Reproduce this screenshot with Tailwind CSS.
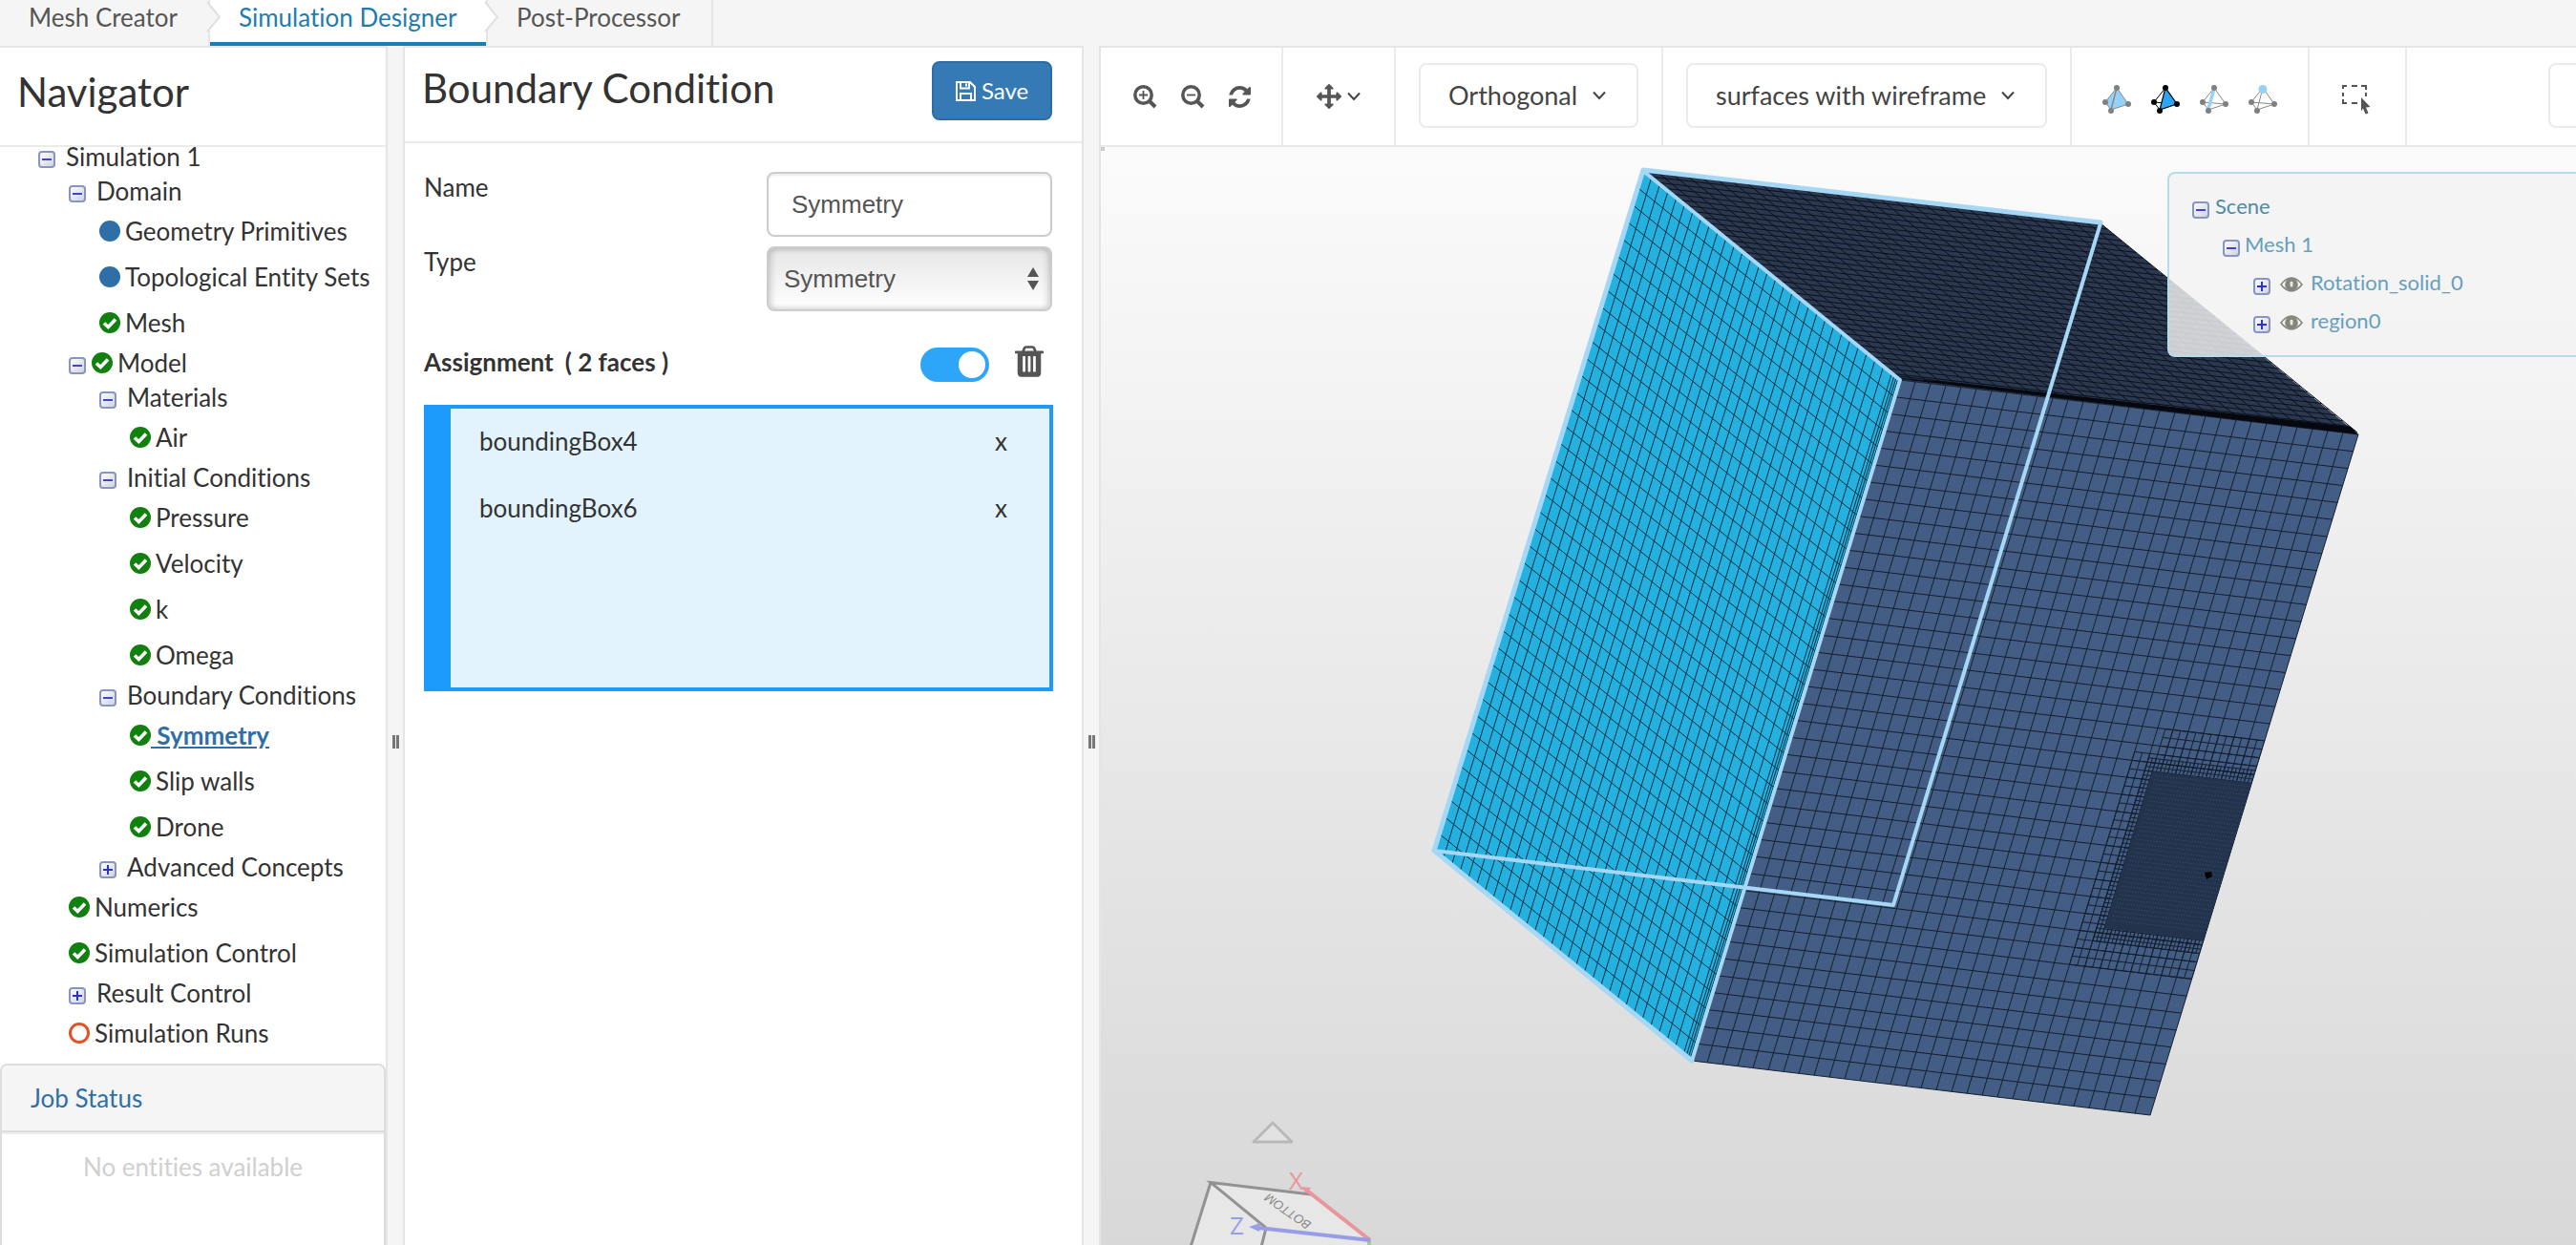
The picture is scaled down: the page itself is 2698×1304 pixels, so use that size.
<!DOCTYPE html>
<html lang="en">
<head>
<meta charset="utf-8">
<title>Simulation Designer</title>
<script src="https://cdn.jsdelivr.net/npm/@tailwindcss/browser@4"></script>
</head>
<body class="flex h-screen flex-col overflow-hidden bg-[#f5f5f5] font-['Lato',sans-serif] text-[26px] leading-8 text-[#333] [font-variant-ligatures:no-common-ligatures]">

<!-- Shared icons -->
<svg class="absolute size-0" aria-hidden="true">
  <defs>
    <linearGradient id="boxfill" x1="0" y1="0" x2="1" y2="1"><stop offset="0" stop-color="#fff"/><stop offset="1" stop-color="#cfd0da"/></linearGradient>
  </defs>
  <symbol id="minus" viewBox="0 0 18 18"><rect x="1" y="1" width="16" height="16" rx="3" fill="url(#boxfill)" stroke="#8794c6" stroke-width="2"/><path d="M4 9h10" stroke="#3b44d6" stroke-width="2"/></symbol>
  <symbol id="plus" viewBox="0 0 18 18"><rect x="1" y="1" width="16" height="16" rx="3" fill="url(#boxfill)" stroke="#8794c6" stroke-width="2"/><path d="M4 9h10M9 4v10" stroke="#2a33d2" stroke-width="2"/></symbol>
  <symbol id="check" viewBox="0 0 22 22"><circle cx="11" cy="11" r="11" fill="#12800f"/><path d="M5 11.5l4.300 4 7.700-8" fill="none" stroke="#fff" stroke-width="3.600"/></symbol>
  <symbol id="dot" viewBox="0 0 22 22"><circle cx="11" cy="11" r="11" fill="#2f6fa7"/></symbol>
  <symbol id="ring" viewBox="0 0 22 22"><circle cx="11" cy="11" r="9.500" fill="#fff" stroke="#df5426" stroke-width="3"/></symbol>
  <symbol id="eye" viewBox="0 0 24 16"><path d="M1 8Q12-6 23 8Q12 22 1 8z" fill="none" stroke="#85857d" stroke-width="1.600"/><circle cx="12" cy="8" r="6.800" fill="#85857d"/><rect x="10.500" y="4.500" width="3" height="6" rx="1.500" fill="#e6e6e4"/></symbol>
  <symbol id="chev" viewBox="0 0 14 10"><path d="M1 1.500l6 6.500 6-6.500" fill="none" stroke="#444" stroke-width="2"/></symbol>
</svg>

<nav class="flex h-12 shrink-0">
  <a href="#" class="relative w-[220px] border-r-2 border-[#e5e5e5] pl-[30px] pt-[2px] text-[#555]">Mesh Creator
    <svg class="absolute -right-[14px] top-[2px] z-10" width="16" height="32"><path d="M1 0l13 16L1 31" fill="#f5f5f5" stroke="#e0e0e0" stroke-width="2"/></svg>
  </a>
  <a href="#" class="relative w-[289px] border-b-4 border-[#1e7cb0] bg-white pl-[30px] pt-[2px] text-[#1e7cb0]">Simulation Designer
    <svg class="absolute -right-[14px] top-[2px] z-10" width="16" height="32"><path d="M1 0l13 16L1 31" fill="#fff" stroke="#e0e0e0" stroke-width="2"/></svg>
  </a>
  <a href="#" class="w-[238px] border-x-2 border-[#e5e5e5] pl-[30px] pt-[2px] text-[#555]">Post-Processor</a>
</nav>

<main class="flex min-h-0 flex-1">
  <!-- Navigator -->
  <aside class="flex w-[406px] shrink-0 flex-col border-r-2 border-t-2 border-[#e5e5e5] bg-white">
    <h1 class="relative z-10 h-[104px] shrink-0 border-b-2 border-[#ebebeb] bg-white pl-[18px] pt-[22px] text-[42px] leading-12">Navigator</h1>
    <ul class="-mt-2 shrink-0 whitespace-nowrap">
      <li class="flex h-9 items-center pl-[40px]"><svg class="mt-1.5 size-[18px]"><use href="#minus"/></svg><a href="#" class="ml-[11px]">Simulation 1</a></li>
      <li class="flex h-9 items-center pl-[72px]"><svg class="mt-1.5 size-[18px]"><use href="#minus"/></svg><a href="#" class="ml-[11px]">Domain</a></li>
      <li class="flex h-12 items-center pl-[104px]"><svg class="size-[22px]"><use href="#dot"/></svg><a href="#" class="ml-[5px]">Geometry Primitives</a></li>
      <li class="flex h-12 items-center pl-[104px]"><svg class="size-[22px]"><use href="#dot"/></svg><a href="#" class="ml-[5px]">Topological Entity Sets</a></li>
      <li class="flex h-12 items-center pl-[104px]"><svg class="size-[22px]"><use href="#check"/></svg><a href="#" class="ml-[5px]">Mesh</a></li>
      <li class="flex h-9 items-center pl-[72px]"><svg class="mt-1.5 size-[18px]"><use href="#minus"/></svg><svg class="ml-1.5 size-[22px]"><use href="#check"/></svg><a href="#" class="ml-[5px]">Model</a></li>
      <li class="flex h-9 items-center pl-[104px]"><svg class="mt-1.5 size-[18px]"><use href="#minus"/></svg><a href="#" class="ml-[11px]">Materials</a></li>
      <li class="flex h-12 items-center pl-[136px]"><svg class="size-[22px]"><use href="#check"/></svg><a href="#" class="ml-[5px]">Air</a></li>
      <li class="flex h-9 items-center pl-[104px]"><svg class="mt-1.5 size-[18px]"><use href="#minus"/></svg><a href="#" class="ml-[11px]">Initial Conditions</a></li>
      <li class="flex h-12 items-center pl-[136px]"><svg class="size-[22px]"><use href="#check"/></svg><a href="#" class="ml-[5px]">Pressure</a></li>
      <li class="flex h-12 items-center pl-[136px]"><svg class="size-[22px]"><use href="#check"/></svg><a href="#" class="ml-[5px]">Velocity</a></li>
      <li class="flex h-12 items-center pl-[136px]"><svg class="size-[22px]"><use href="#check"/></svg><a href="#" class="ml-[5px]">k</a></li>
      <li class="flex h-12 items-center pl-[136px]"><svg class="size-[22px]"><use href="#check"/></svg><a href="#" class="ml-[5px]">Omega</a></li>
      <li class="flex h-9 items-center pl-[104px]"><svg class="mt-1.5 size-[18px]"><use href="#minus"/></svg><a href="#" class="ml-[11px]">Boundary Conditions</a></li>
      <li class="flex h-12 items-center pl-[136px]"><svg class="size-[22px]"><use href="#check"/></svg><a href="#" class="font-bold text-[#2f6fa7] underline">&nbsp;Symmetry</a></li>
      <li class="flex h-12 items-center pl-[136px]"><svg class="size-[22px]"><use href="#check"/></svg><a href="#" class="ml-[5px]">Slip walls</a></li>
      <li class="flex h-12 items-center pl-[136px]"><svg class="size-[22px]"><use href="#check"/></svg><a href="#" class="ml-[5px]">Drone</a></li>
      <li class="flex h-9 items-center pl-[104px]"><svg class="mt-1.5 size-[18px]"><use href="#plus"/></svg><a href="#" class="ml-[11px]">Advanced Concepts</a></li>
      <li class="flex h-12 items-center pl-[72px]"><svg class="size-[22px]"><use href="#check"/></svg><a href="#" class="ml-[5px]">Numerics</a></li>
      <li class="flex h-12 items-center pl-[72px]"><svg class="size-[22px]"><use href="#check"/></svg><a href="#" class="ml-[5px]">Simulation Control</a></li>
      <li class="flex h-9 items-center pl-[72px]"><svg class="mt-1.5 size-[18px]"><use href="#plus"/></svg><a href="#" class="ml-[11px]">Result Control</a></li>
      <li class="flex h-12 items-center pl-[72px]"><svg class="size-[22px]"><use href="#ring"/></svg><a href="#" class="ml-[5px]">Simulation Runs</a></li>
    </ul>
    <section class="mt-2 flex min-h-0 flex-1 flex-col rounded-t-lg border-2 border-b-0 border-[#ddd]">
      <h2 class="h-[70px] shrink-0 rounded-t-lg border-b-2 border-[#ddd] bg-[#f5f5f5] pl-[30px] pt-[18px] text-[#2f6fa7]">Job Status</h2>
      <p class="border-t-2 border-[#eee] pt-[18px] text-center leading-8 text-[#d0d0d0]">No entities available</p>
    </section>
  </aside>

  <div class="flex w-4 shrink-0 justify-center pt-[722px]"><span class="h-3.5 w-[7px] border-x-[3px] border-[#777]"></span></div>

  <!-- Boundary condition editor -->
  <form class="w-[713px] shrink-0 border-x-2 border-t-2 border-[#e5e5e5] bg-white">
    <div class="flex h-[100px] items-start justify-between border-b-2 border-[#ebebeb] pl-[18px] pr-[31px] pt-3.5">
      <h1 class="pt-1 text-[42px] leading-12">Boundary Condition</h1>
      <button type="button" class="flex h-[62px] w-[126px] items-center justify-center gap-1.5 rounded-lg border-2 border-[#2e6da4] bg-[#367ab5] text-[24px] text-white">
        <svg width="21" height="21" viewBox="0 0 21 21" fill="none" stroke="#fff" stroke-width="2"><path d="M1 1h14l5 5v14H1zM5 1v6.500h9V1M5 20v-7h11v7"/><path d="M11 2.500v3"/></svg>Save</button>
    </div>
    <div class="flex flex-col gap-2.5 pl-5 pr-[31px] pt-[30px]">
      <div class="flex items-start justify-between"><label for="bcname">Name</label>
        <input id="bcname" type="text" value="Symmetry" class="h-[68px] w-[299px] rounded-lg border-2 border-[#ccc] px-6 font-['Liberation_Sans',sans-serif] text-[#555] shadow-[inset_0_2px_2px_rgba(0,0,0,0.08)]"></div>
      <div class="flex items-start justify-between"><label for="bctype">Type</label>
        <div class="relative">
          <select id="bctype" class="block h-[68px] w-[299px] appearance-none rounded-lg border-2 border-[#ccc] bg-linear-to-b from-[#e6e6e6] to-white px-4 font-['Liberation_Sans',sans-serif] text-[#555] shadow-[inset_3px_0_6px_rgba(0,0,0,0.15),inset_-3px_0_6px_rgba(0,0,0,0.15)]"><option>Symmetry</option></select>
          <svg class="pointer-events-none absolute right-3.5 top-[22px]" width="12" height="24"><path d="M0 10L6 0l6 10zM0 14h12L6 24z" fill="#555"/></svg>
        </div></div>
    </div>
    <div class="mt-9 flex items-start pl-5 pr-10">
      <label for="assign" class="mr-auto flex gap-3 pt-px font-bold"><span>Assignment</span><span>( 2 faces )</span></label>
      <input id="assign" type="checkbox" checked class="mt-0.5 h-9 w-[72px] appearance-none rounded-full bg-[#2da6f9] p-1 before:ml-9 before:block before:size-7 before:rounded-full before:bg-white">
      <button type="button" aria-label="Clear" class="ml-[27px]"><svg width="30" height="33" viewBox="192 128 1408 1536"><path fill="#555" d="M704 1376v-704q0-14-9-23t-23-9h-64q-14 0-23 9t-9 23v704q0 14 9 23t23 9h64q14 0 23-9t9-23zm256 0v-704q0-14-9-23t-23-9h-64q-14 0-23 9t-9 23v704q0 14 9 23t23 9h64q14 0 23-9t9-23zm256 0v-704q0-14-9-23t-23-9h-64q-14 0-23 9t-9 23v704q0 14 9 23t23 9h64q14 0 23-9t9-23zm-544-992h448l-48-117q-7-9-17-11h-317q-10 2-17 11zm928 32v64q0 14-9 23t-23 9h-96v948q0 83-47 143.500t-113 60.500h-832q-66 0-113-58.500t-47-141.500v-952h-96q-14 0-23-9t-9-23v-64q0-14 9-23t23-9h309l70-167q15-37 54-63t79-26h320q40 0 79 26t54 63l70 167h309q14 0 23 9t9 23z"/></svg></button>
    </div>
    <ul class="ml-5 mr-[30px] mt-6 h-[300px] border-4 border-l-[28px] border-[#1c9bfd] bg-[#e2f3fe] pl-[30px] pr-11 pt-[18px]">
      <li class="flex h-[70px] items-start justify-between"><span>boundingBox4</span><button type="button" aria-label="Remove boundingBox4">x</button></li>
      <li class="flex h-[70px] items-start justify-between"><span>boundingBox6</span><button type="button" aria-label="Remove boundingBox6">x</button></li>
    </ul>
  </form>

  <div class="flex w-4 shrink-0 justify-center pt-[722px]"><span class="h-3.5 w-[7px] border-x-[3px] border-[#777]"></span></div>

  <!-- Viewer -->
  <section class="flex min-w-0 flex-1 flex-col border-l-2 border-t-2 border-[#e5e5e5]">
    <div class="flex h-[104px] shrink-0 items-stretch border-b-2 border-[#e9e9e9] bg-white text-[27px] text-[#444]">
      <div class="flex w-[191px] items-center gap-[25px] border-r-2 border-[#ebebeb] pl-[34px]">
        <button type="button" aria-label="Zoom in"><svg class="block" width="25" height="25" viewBox="0 0 25 25" fill="none" stroke="#555"><circle cx="10.500" cy="10.500" r="8.700" stroke-width="3.500"/><path d="M17 17l6 6" stroke-width="4"/><path d="M6 10.500h9M10.500 6v9" stroke-width="1.800"/></svg></button>
        <button type="button" aria-label="Zoom out"><svg class="block" width="25" height="25" viewBox="0 0 25 25" fill="none" stroke="#555"><circle cx="10.500" cy="10.500" r="8.700" stroke-width="3.500"/><path d="M17 17l6 6" stroke-width="4"/><path d="M6 10.500h9" stroke-width="1.800"/></svg></button>
        <button type="button" aria-label="Reset view"><svg class="block" width="23" height="23" viewBox="128 128 1536 1536"><path fill="#555" d="M1639 1056q0 5-1 7-64 268-268 434.500t-478 166.500q-146 0-282.500-55t-243.500-157l-129 129q-19 19-45 19t-45-19-19-45v-448q0-26 19-45t45-19h448q26 0 45 19t19 45-19 45l-137 137q71 66 161 102t187 36q134 0 250-65t186-179q11-17 53-117 8-23 30-23h192q13 0 22.500 9.500t9.500 22.500zm25-800v448q0 26-19 45t-45 19h-448q-26 0-45-19t-19-45 19-45l138-138q-148-137-349-137-134 0-250 65t-186 179q-11 17-53 117-8 23-30 23h-199q-13 0-22.500-9.500t-9.500-22.500v-7q65-268 270-434.500t480-166.500q146 0 284 55.500t245 156.500l130-129q19-19 45-19t45 19 19 45z"/></svg></button>
      </div>
      <div class="flex w-[118px] items-center justify-center border-r-2 border-[#ebebeb]">
        <button type="button" aria-label="Move" class="flex items-center gap-1.5"><svg width="26" height="26" viewBox="0 0 1792 1792"><path fill="#555" d="M1792 896q0 26-19 45l-256 256q-19 19-45 19t-45-19-19-45v-128h-384v384h128q26 0 45 19t19 45-19 45l-256 256q-19 19-45 19t-45-19l-256-256q-19-19-19-45t19-45 45-19h128v-384h-384v128q0 26-19 45t-45 19-45-19l-256-256q-19-19-19-45t19-45l256-256q19-19 45-19t45 19 19 45v128h384v-384h-128q-26 0-45-19t-19-45 19-45l256-256q19-19 45-19t45 19l256 256q19 19 19 45t-19 45-45 19h-128v384h384v-128q0-26 19-45t45-19 45 19l256 256q19 19 19 45z"/></svg><svg class="h-2.5 w-3.5"><use href="#chev"/></svg></button>
      </div>
      <div class="flex w-[280px] items-start border-r-2 border-[#ebebeb] px-6 pt-4">
        <button type="button" class="flex h-[68px] w-[230px] items-center justify-between rounded-lg border-2 border-[#ebebeb] pl-[29px] pr-8">Orthogonal<svg class="h-2.5 w-3.5"><use href="#chev"/></svg></button>
      </div>
      <div class="flex w-[428px] items-start border-r-2 border-[#ebebeb] px-6 pt-4">
        <button type="button" class="flex h-[68px] w-[378px] items-center justify-between rounded-lg border-2 border-[#ebebeb] pl-[29px] pr-8">surfaces with wireframe<svg class="h-2.5 w-3.5"><use href="#chev"/></svg></button>
      </div>
      <div class="flex w-[249px] items-center gap-5 border-r-2 border-[#ebebeb] pl-8 pt-1.5">
        <button type="button" aria-label="Pick volumes"><svg class="block" width="31" height="30" viewBox="0 0 31 30"><path d="M15 3L3 18l6 8 18-6z" fill="#94d2fa" stroke="#888"/><path d="M15 3L9 26" stroke="#888" stroke-width="1.500"/><g fill="#808080"><circle cx="15" cy="3" r="3"/><circle cx="3" cy="18" r="3"/><circle cx="9" cy="27" r="3"/><circle cx="27" cy="20" r="3"/></g></svg></button>
        <button type="button" aria-label="Pick faces"><svg class="block" width="31" height="30" viewBox="0 0 31 30"><path d="M15 3L3 18l6 8M3 18l24 2" fill="none" stroke="#000"/><path d="M15 3L9 26l18-6z" fill="#2ba5f8" stroke="#000" stroke-width="1.200"/><g fill="#000"><circle cx="15" cy="3" r="3"/><circle cx="3" cy="18" r="3"/><circle cx="9" cy="27" r="3"/><circle cx="27" cy="20" r="3"/></g></svg></button>
        <button type="button" aria-label="Pick edges"><svg class="block" width="31" height="30" viewBox="0 0 31 30"><path d="M15 3L3 18l6 8 18-6zM3 18l24 2" fill="none" stroke="#888"/><path d="M15 4L9 25" stroke="#94d2fa" stroke-width="3.500"/><g fill="#808080"><circle cx="15" cy="3" r="3"/><circle cx="3" cy="18" r="3"/><circle cx="9" cy="27" r="3"/><circle cx="27" cy="20" r="3"/></g></svg></button>
        <button type="button" aria-label="Pick nodes"><svg class="block" width="31" height="30" viewBox="0 0 31 30"><path d="M15 3L3 18l6 8 18-6zM3 18l24 2M15 3L9 26" fill="none" stroke="#888"/><g fill="#808080"><circle cx="3" cy="18" r="3"/><circle cx="9" cy="27" r="3"/><circle cx="27" cy="20" r="3"/></g><circle cx="15" cy="4.500" r="4.500" fill="#94d2fa"/></svg></button>
      </div>
      <div class="flex w-[102px] items-center border-r-2 border-[#ebebeb] pl-[34px] pt-1.5">
        <button type="button" aria-label="Box select"><svg class="block" width="30" height="31" viewBox="0 0 30 31"><path d="M1 4V1h4M10 1h6M20 1h5v4M1 8v4M1 15v4h4M10 19h6M25 8v4" fill="none" stroke="#555" stroke-width="2"/><path d="M20 13l9.500 10-4.500.5 2.500 6-3 1-2.500-6-2 3z" fill="#555"/></svg></button>
      </div>
      <button type="button" aria-label="More" class="ml-auto mt-4 h-[68px] w-[29px] rounded-l-lg border-2 border-r-0 border-[#ebebeb]"></button>
    </div>

    <div class="relative min-h-0 flex-1 overflow-hidden bg-linear-to-b from-[#fbfbfb] to-[#d8d8d8]">
      <svg class="absolute inset-0 size-full" viewBox="1153 154 1545 1150" preserveAspectRatio="xMinYMin slice" fill="none">
        <rect x="1153" y="154" width="4" height="4" fill="#ccc"/>
        <clipPath id="front"><path d="M1990 398L2470 455 2252 1168 1772 1111z"/></clipPath>
        <path d="M1721 179L2200 234 2470 455 1990 398z" fill="#2b3850"/>
        <path d="M1990 398L2470 455 2252 1168 1772 1111z" fill="#445d84"/>
        <path d="M1721 179L1990 398 1772 1111 1502 891z" fill="#24b1e0"/>
        <path id="gridTop" stroke="#0b111c" stroke-width="1"/>
        <path id="gridSide" stroke="#062f40" stroke-width="1"/>
        <path id="gridFront" stroke="#141f30" stroke-width="1"/>
        <g clip-path="url(#front)">
          <path id="gridMid" stroke="#141f30" stroke-width="1"/>
          <path id="gridFine" stroke="#141f30" stroke-width="1"/>
          <path d="M2254 808L2374 822 2321 987 2204 972z" fill="#22334b"/>
          <path id="gridCore" stroke="#3a5175" stroke-width="1" stroke-dasharray="1 2"/>
        </g>
        <path d="M2309 914l7-1 1 5-6 3z" fill="#000"/>
        <path d="M1992 397L2030 399 2462 447 2470 455z" fill="#05080e"/>
        <g stroke="#a6d8f6" stroke-linejoin="round" stroke-linecap="round">
          <path d="M2200 233L1721 178 1502 891 1772 1111" stroke-width="5"/>
          <path d="M1721 179L1990 398 1772 1111M2200 234L1983 948 1502 891" stroke-width="4"/>
        </g>
        <!-- Orientation cube -->
        <path d="M1333 1176l20 20h-40z" fill="#e2e2e2" stroke="#b8b8b8" stroke-width="3" stroke-linejoin="round"/>
        <path d="M1268 1238L1373 1251 1435 1299 1434 1310H1245z" fill="#e7e7e7"/>
        <path d="M1373 1251L1268 1238.500 1326 1286 1321 1306M1268 1238.500L1247 1306" stroke="#929292" stroke-width="3"/>
        <path d="M1434 1298v8" stroke="#9cd0a0" stroke-width="4"/>
        <path d="M1435 1299L1369 1247" stroke="#e8969c" stroke-width="4"/>
        <path d="M1363 1243l10 1-5 6z" fill="#e8969c"/>
        <path d="M1435 1299L1318 1286" stroke="#989de6" stroke-width="4"/>
        <path d="M1308 1285l12-4-1 9z" fill="#989de6"/>
        <text x="1350" y="1246" fill="#e8969c" class="font-['Open_Sans',sans-serif] text-[26px]">X</text>
        <text x="1288" y="1293" fill="#989de6" class="font-['Open_Sans',sans-serif] text-[26px]">Z</text>
        <text transform="translate(1374 1281) rotate(215)" fill="#888" class="font-['Liberation_Sans',sans-serif] text-[13px] italic">BOTTOM</text>
      </svg>

      <ul class="absolute right-0 top-[26px] h-[194px] w-[428px] rounded-l-lg border-2 border-r-0 border-[#b5dce8] bg-[#f3f3f3]/[0.82] pt-3.5 text-[22px] leading-10 text-[#66a0bd]">
        <li class="flex h-10 items-center pl-6"><svg class="mt-2 size-[18px]"><use href="#minus"/></svg><a href="#" class="ml-1.5 text-[#4f8aa5]">Scene</a></li>
        <li class="flex h-10 items-center pl-14"><svg class="mt-2 size-[18px]"><use href="#minus"/></svg><a href="#" class="ml-[5px]">Mesh 1</a></li>
        <li class="flex h-10 items-center pl-[88px]"><svg class="mt-2 size-[18px]"><use href="#plus"/></svg><svg class="ml-2.5 mt-1 h-4 w-6"><use href="#eye"/></svg><a href="#" class="ml-2">Rotation_solid_0</a></li>
        <li class="flex h-10 items-center pl-[88px]"><svg class="mt-2 size-[18px]"><use href="#plus"/></svg><svg class="ml-2.5 mt-1 h-4 w-6"><use href="#eye"/></svg><a href="#" class="ml-2">region0</a></li>
      </ul>
    </div>
  </section>
</main>

<script>
// Mesh wireframe: each face is origin + s*u + t*v
const range = (a, b, step) => { const r = []; for (let x = a; x <= b + 1e-9; x += step) r.push(x); return r; };
function grid(id, o, u, v, ss, ts, box = [0, 1, 0, 1]) {
  const p = (s, t) => (o[0] + s * u[0] + t * v[0]).toFixed(1) + ' ' + (o[1] + s * u[1] + t * v[1]).toFixed(1);
  const [s0, s1, t0, t1] = box;
  let d = '';
  ss.forEach(s => d += 'M' + p(s, t0) + 'L' + p(s, t1));
  ts.forEach(t => d += 'M' + p(s0, t) + 'L' + p(s1, t));
  const el = document.getElementById(id);
  el.setAttribute('d', (el.getAttribute('d') || '') + d);
}
const down = [-218, 713], deep = [269, 219], across = [480, 57];
grid('gridSide', [1721, 179], deep, down, range(0, .97, 1 / 31).concat([.978, .986, .993]), range(0, 1, 1 / 40));
grid('gridTop', [1721, 179], [479, 55], deep, range(0, 1, 1 / 31), range(0, .96, 1 / 36).concat([.97, .98, .99]));
grid('gridFront', [1990, 398], across, down, range(0, 1, 1 / 30), range(0, 1, 1 / 40));
const S = 1 / 30, T = 1 / 40, o = [1990, 398];
grid('gridMid', o, across, down, range(22 * S, 30 * S, S / 2), range(19.500 * T, 32 * T, T / 2), [22 * S, 1, 19.500 * T, 32 * T]);
grid('gridMid', o, across, down, range(23.500 * S, 30 * S, S / 2), range(18 * T, 19.500 * T, T / 2), [23.500 * S, 1, 18 * T, 19.500 * T]);
grid('gridFine', o, across, down, range(23 * S, 30 * S, S / 4), range(19.750 * T, 30.500 * T, T / 4), [23 * S, 1, 19.750 * T, 30.500 * T]);
grid('gridCore', o, across, down, [], range(20.200 * T, 29.200 * T, T / 4), [23.800 * S, 1, 0, 1]);
</script>
</body>
</html>
